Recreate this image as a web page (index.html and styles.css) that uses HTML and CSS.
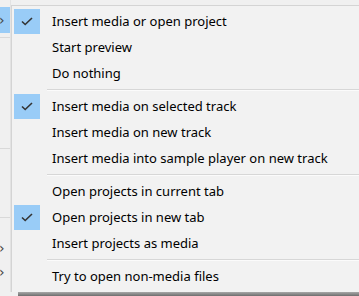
FILE: index.html
```html
<!DOCTYPE html>
<html lang="en">

<head>
  <meta charset="UTF-8">
  <meta name="viewport" content="width=device-width, initial-scale=1.0">
  <title>Drop options</title>
  <link rel="stylesheet" href="styles.css">
</head>

<body>
  <div class="page">
    <div class="side">
      <div class="side-item active"><span class="chev">&rsaquo;</span></div>
      <div class="side-line"></div>
      <div class="side-gap"></div>
      <div class="side-line"></div>
      <div class="side-gap2"></div>
      <div class="side-line last"></div>
      <div class="side-item small"><span class="chev">&rsaquo;</span></div>
      <div class="side-item small"><span class="chev">&rsaquo;</span></div>
    </div>

    <div class="menu">
      <div class="item checked"><span class="check"><svg width="12" height="9" viewBox="0 0 12 9"><path d="M1 4.5 L4.2 7.5 L11 1" fill="none" stroke="#333" stroke-width="1.6"/></svg></span><span class="label">Insert media or open project</span></div>
      <div class="item"><span class="check"></span><span class="label">Start preview</span></div>
      <div class="item"><span class="check"></span><span class="label">Do nothing</span></div>
      <div class="sep"></div>
      <div class="item checked"><span class="check"><svg width="12" height="9" viewBox="0 0 12 9"><path d="M1 4.5 L4.2 7.5 L11 1" fill="none" stroke="#333" stroke-width="1.6"/></svg></span><span class="label">Insert media on selected track</span></div>
      <div class="item"><span class="check"></span><span class="label">Insert media on new track</span></div>
      <div class="item"><span class="check"></span><span class="label">Insert media into sample player on new track</span></div>
      <div class="sep"></div>
      <div class="item"><span class="check"></span><span class="label">Open projects in current tab</span></div>
      <div class="item checked"><span class="check"><svg width="12" height="9" viewBox="0 0 12 9"><path d="M1 4.5 L4.2 7.5 L11 1" fill="none" stroke="#333" stroke-width="1.6"/></svg></span><span class="label">Open projects in new tab</span></div>
      <div class="item"><span class="check"></span><span class="label">Insert projects as media</span></div>
      <div class="sep"></div>
      <div class="item"><span class="check"></span><span class="label">Try to open non-media files</span></div>
    </div>
  </div>
  <div class="shadow"></div>
</body>

</html>
```

FILE: styles.css
```css
* {
  margin: 0;
  padding: 0;
  box-sizing: border-box;
}

body {
  background: #f0f0f0;
  font-family: 'Noto Sans', 'Open Sans', sans-serif;
  font-size: 13px;
  color: #000;
  width: 359px;
  height: 296px;
  overflow: hidden;
  position: relative;
}

.page {
  display: flex;
  height: 292px;
}

.side {
  width: 11px;
  flex-shrink: 0;
  border-right: 1px solid #e3e3e3;
  display: flex;
  flex-direction: column;
  padding-top: 7px;
}

.side-item {
  height: 26px;
  flex-shrink: 0;
  display: flex;
  align-items: center;
}

.side-item.active {
  background: #99ccf7;
}

.side-item.small {
  height: 24px;
}

.chev {
  color: #444;
  font-size: 14px;
  line-height: 1;
  margin-left: -1px;
  font-family: 'DejaVu Sans', sans-serif;
}

.side-line {
  height: 1px;
  flex-shrink: 0;
  margin-top: 4px;
  background: #d9d9d9;
}

.side-line.last {
  margin-bottom: 18px;
}

.side-gap {
  height: 106px;
  flex-shrink: 0;
}

.side-gap2 {
  height: 64px;
  flex-shrink: 0;
}

.menu {
  margin-top: 5px;
  flex: 1;
  background: #f2f2f2;
  border-top: 1px solid #d4d4d4;
  border-left: 1px solid #d4d4d4;
  padding: 2px 0 2px 2px;
  display: flex;
  flex-direction: column;
}

.item {
  height: 26px;
  display: flex;
  align-items: center;
  white-space: nowrap;
}

.check {
  width: 26px;
  height: 25px;
  margin-right: 12px;
  display: flex;
  align-items: center;
  justify-content: center;
}

.checked .check {
  background: #99ccf7;
}

.sep {
  height: 7px;
  margin-left: 33px;
  display: flex;
  align-items: center;
}

.sep::before {
  content: '';
  flex: 1;
  height: 1px;
  background: #d7d7d7;
  box-shadow: 0 1px 0 #fbfbfb;
}

.shadow {
  position: absolute;
  left: 18px;
  right: 0;
  bottom: 0;
  height: 4px;
  background: linear-gradient(#a8a8a8, #6e6e6e);
}
```
